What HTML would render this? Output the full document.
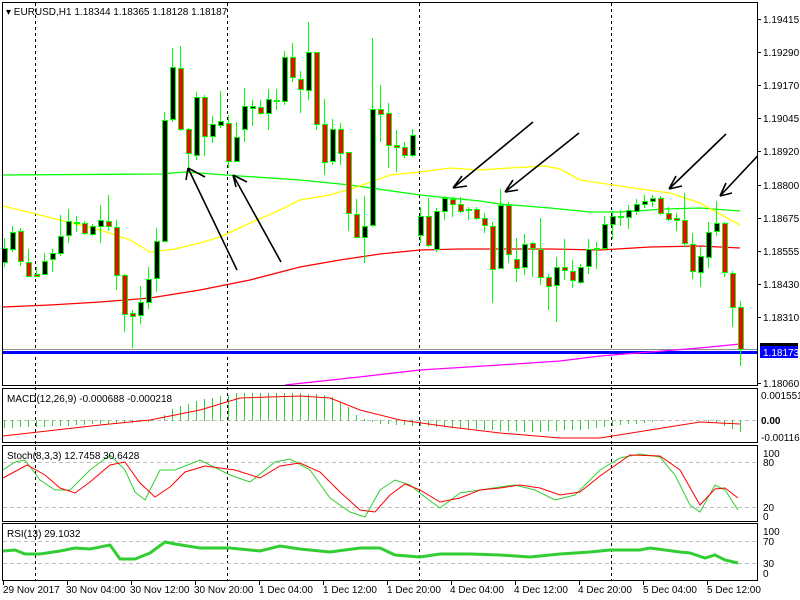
<!DOCTYPE html>
<html><head><meta charset="utf-8"><style>
html,body{margin:0;padding:0;background:#fff;width:800px;height:600px;overflow:hidden}
svg{display:block;font-family:"Liberation Sans",sans-serif;font-size:10px}
.b{fill:#000;stroke:#00ff00}.r{fill:#ff0000;stroke:#00ff00}
</style></head><body>
<svg width="800" height="600" xmlns="http://www.w3.org/2000/svg" shape-rendering="crispEdges">
<rect width="800" height="600" fill="#fff"/>
<g stroke="#000" stroke-dasharray="3,3">
<line x1="35.5" y1="3" x2="35.5" y2="580"/><line x1="227.5" y1="3" x2="227.5" y2="580"/>
<line x1="419.5" y1="3" x2="419.5" y2="580"/><line x1="611.5" y1="3" x2="611.5" y2="580"/>
</g>
<g stroke="#c0c0c0" stroke-dasharray="4,3">
<line x1="3" y1="420.5" x2="757" y2="420.5"/>
<line x1="3" y1="462.5" x2="757" y2="462.5"/><line x1="3" y1="507.5" x2="757" y2="507.5"/>
<line x1="3" y1="541.5" x2="757" y2="541.5"/><line x1="3" y1="563.5" x2="757" y2="563.5"/>
</g>
<line x1="3" y1="349.5" x2="757" y2="349.5" stroke="#909090"/>
<rect x="3" y="351" width="754" height="3" fill="#0000ff"/>
<g fill="none" shape-rendering="auto" stroke-width="1.3">
<polyline stroke="#00ff00" points="3,175 160,174 185,172 240,176 300,180 350,185 420,195 480,201 500,204 550,208 590,212 620,212 665,209 700,208 740,211"/>
<polyline stroke="#ffff00" points="3,206 40,215 100,230 130,240 150,252 175,249 200,243 220,237 250,223 280,210 300,200 330,195 360,186 390,175 420,172 450,168 480,170 510,168 545,166 560,169 580,180 600,183 640,189 670,193 700,203 740,225"/>
<polyline stroke="#ff0000" points="3,307 50,305 100,302 150,298 200,290 250,280 300,267 340,260 380,254 420,250 460,249 500,249 550,249 600,250 650,247 700,246 740,248"/>
<polyline stroke="#ff00ff" points="285,385 350,378 420,370 500,365 560,361 600,356 650,352 700,348 740,344"/>
</g>
<path stroke="#00ff00" fill="none" d="M4.5,238V267M12.5,226V252M20.5,228V266M28.5,249V277M36.5,267V277M44.5,253V275M52.5,249V272M60.5,215V256M68.5,209V243M76.5,216V232M84.5,221V235M92.5,224V236M100.5,205V243M108.5,195V231M116.5,220V290M124.5,274V332M132.5,310V348M140.5,286V324M148.5,267V309M156.5,228V292M164.5,112V241M172.5,48V122M180.5,46V131M188.5,128V172M196.5,92V160M204.5,95V156M212.5,116V143M220.5,91V128M228.5,115V168M236.5,122V161M244.5,88V142M252.5,100V126M260.5,100V115M268.5,89V130M276.5,89V110M284.5,51V105M292.5,43V82M300.5,71V113M308.5,22V100M316.5,52V130M324.5,99V175M332.5,119V165M340.5,123V165M348.5,152V231M356.5,199V238M364.5,196V263M372.5,38V227M380.5,85V142M388.5,103V168M396.5,130V172M404.5,142V158M412.5,129V157M420.5,207V243M428.5,198V247M436.5,208V252M444.5,196V220M452.5,197V217M460.5,197V213M468.5,207V220M476.5,207V220M484.5,213V233M492.5,222V303M500.5,189V269M508.5,202V263M516.5,238V282M524.5,234V275M532.5,242V277M540.5,218V285M548.5,274V310M556.5,257V322M564.5,239V280M572.5,260V288M580.5,264V284M588.5,239V274M596.5,242V269M604.5,216V250M612.5,211V239M620.5,210V226M628.5,205V229M636.5,199V215M644.5,195V208M652.5,195V207M660.5,196V215M668.5,207V221M676.5,213V231M684.5,193V247M692.5,233V279M700.5,247V287M708.5,222V268M716.5,201V236M724.5,222V277M732.5,271V327M740.5,301V366"/>
<g>
<rect class="b" x="2.5" y="248.5" width="5" height="14"/>
<rect class="b" x="10.5" y="232.5" width="5" height="17"/>
<rect class="r" x="18.5" y="231.5" width="5" height="30"/>
<rect class="r" x="26.5" y="262.5" width="5" height="14"/>
<rect class="r" x="34.5" y="274.5" width="5" height="2"/>
<rect class="b" x="42.5" y="261.5" width="5" height="13"/>
<rect class="b" x="50.5" y="253.5" width="5" height="6"/>
<rect class="b" x="58.5" y="236.5" width="5" height="17"/>
<rect class="b" x="66.5" y="221.5" width="5" height="14"/>
<rect class="b" x="74.5" y="222.5" width="5" height="1"/>
<rect class="r" x="82.5" y="223.5" width="5" height="10"/>
<rect class="b" x="90.5" y="226.5" width="5" height="8"/>
<rect class="b" x="98.5" y="220.5" width="5" height="6"/>
<rect class="r" x="106.5" y="221.5" width="5" height="5"/>
<rect class="r" x="114.5" y="227.5" width="5" height="48"/>
<rect class="r" x="122.5" y="275.5" width="5" height="39"/>
<rect class="r" x="130.5" y="313.5" width="5" height="3"/>
<rect class="b" x="138.5" y="302.5" width="5" height="13"/>
<rect class="b" x="146.5" y="279.5" width="5" height="23"/>
<rect class="b" x="154.5" y="241.5" width="5" height="37"/>
<rect class="b" x="162.5" y="120.5" width="5" height="121"/>
<rect class="b" x="170.5" y="67.5" width="5" height="52"/>
<rect class="r" x="178.5" y="68.5" width="5" height="61"/>
<rect class="r" x="186.5" y="129.5" width="5" height="24"/>
<rect class="b" x="194.5" y="97.5" width="5" height="58"/>
<rect class="r" x="202.5" y="97.5" width="5" height="39"/>
<rect class="b" x="210.5" y="124.5" width="5" height="12"/>
<rect class="b" x="218.5" y="121.5" width="5" height="4"/>
<rect class="r" x="226.5" y="123.5" width="5" height="38"/>
<rect class="b" x="234.5" y="137.5" width="5" height="24"/>
<rect class="b" x="242.5" y="106.5" width="5" height="23"/>
<rect class="b" x="250.5" y="106.5" width="5" height="2"/>
<rect class="r" x="258.5" y="107.5" width="5" height="6"/>
<rect class="b" x="266.5" y="99.5" width="5" height="14"/>
<rect class="b" x="274.5" y="100.5" width="5" height="1"/>
<rect class="b" x="282.5" y="57.5" width="5" height="44"/>
<rect class="r" x="290.5" y="57.5" width="5" height="20"/>
<rect class="r" x="298.5" y="79.5" width="5" height="10"/>
<rect class="b" x="306.5" y="52.5" width="5" height="38"/>
<rect class="r" x="314.5" y="52.5" width="5" height="72"/>
<rect class="r" x="322.5" y="124.5" width="5" height="38"/>
<rect class="b" x="330.5" y="129.5" width="5" height="32"/>
<rect class="r" x="338.5" y="129.5" width="5" height="24"/>
<rect class="r" x="346.5" y="152.5" width="5" height="61"/>
<rect class="r" x="354.5" y="214.5" width="5" height="23"/>
<rect class="b" x="362.5" y="226.5" width="5" height="11"/>
<rect class="b" x="370.5" y="109.5" width="5" height="116"/>
<rect class="r" x="378.5" y="109.5" width="5" height="5"/>
<rect class="r" x="386.5" y="113.5" width="5" height="32"/>
<rect class="r" x="394.5" y="145.5" width="5" height="2"/>
<rect class="r" x="402.5" y="147.5" width="5" height="8"/>
<rect class="b" x="410.5" y="135.5" width="5" height="20"/>
<rect class="b" x="418.5" y="216.5" width="5" height="19"/>
<rect class="r" x="426.5" y="216.5" width="5" height="29"/>
<rect class="b" x="434.5" y="211.5" width="5" height="38"/>
<rect class="b" x="442.5" y="198.5" width="5" height="13"/>
<rect class="r" x="450.5" y="199.5" width="5" height="5"/>
<rect class="r" x="458.5" y="204.5" width="5" height="7"/>
<rect class="b" x="466.5" y="209.5" width="5" height="1"/>
<rect class="r" x="474.5" y="209.5" width="5" height="9"/>
<rect class="r" x="482.5" y="218.5" width="5" height="7"/>
<rect class="r" x="490.5" y="226.5" width="5" height="43"/>
<rect class="b" x="498.5" y="205.5" width="5" height="63"/>
<rect class="r" x="506.5" y="205.5" width="5" height="49"/>
<rect class="r" x="514.5" y="259.5" width="5" height="9"/>
<rect class="b" x="522.5" y="244.5" width="5" height="23"/>
<rect class="r" x="530.5" y="243.5" width="5" height="5"/>
<rect class="r" x="538.5" y="249.5" width="5" height="28"/>
<rect class="r" x="546.5" y="277.5" width="5" height="9"/>
<rect class="b" x="554.5" y="267.5" width="5" height="18"/>
<rect class="r" x="562.5" y="267.5" width="5" height="3"/>
<rect class="r" x="570.5" y="271.5" width="5" height="9"/>
<rect class="b" x="578.5" y="267.5" width="5" height="15"/>
<rect class="b" x="586.5" y="249.5" width="5" height="17"/>
<rect class="b" x="594.5" y="248.5" width="5" height="1"/>
<rect class="b" x="602.5" y="224.5" width="5" height="24"/>
<rect class="b" x="610.5" y="216.5" width="5" height="8"/>
<rect class="b" x="618.5" y="216.5" width="5" height="1"/>
<rect class="b" x="626.5" y="210.5" width="5" height="7"/>
<rect class="b" x="634.5" y="204.5" width="5" height="7"/>
<rect class="b" x="642.5" y="201.5" width="5" height="3"/>
<rect class="b" x="650.5" y="198.5" width="5" height="3"/>
<rect class="r" x="658.5" y="198.5" width="5" height="15"/>
<rect class="r" x="666.5" y="213.5" width="5" height="6"/>
<rect class="r" x="674.5" y="218.5" width="5" height="2"/>
<rect class="r" x="682.5" y="220.5" width="5" height="23"/>
<rect class="r" x="690.5" y="244.5" width="5" height="27"/>
<rect class="b" x="698.5" y="256.5" width="5" height="16"/>
<rect class="b" x="706.5" y="232.5" width="5" height="25"/>
<rect class="b" x="714.5" y="223.5" width="5" height="8"/>
<rect class="r" x="722.5" y="223.5" width="5" height="49"/>
<rect class="r" x="730.5" y="273.5" width="5" height="34"/>
<rect class="r" x="738.5" y="307.5" width="5" height="42"/>
</g>
<path stroke="#32cd32" fill="none" d="M4.5,420V428M12.5,420V428M20.5,420V427M28.5,420V427M36.5,420V427M44.5,420V427M52.5,420V426M60.5,420V426M68.5,420V426M76.5,420V425M84.5,420V425M92.5,420V424M100.5,420V424M108.5,420V424M116.5,420V423M124.5,420V423M132.5,420V423M140.5,420V422M148.5,420V422M164.5,421V415M172.5,421V409M180.5,421V406M188.5,421V404M196.5,421V401M204.5,421V399M212.5,421V398M220.5,421V396M228.5,421V395M236.5,421V393M244.5,421V393M252.5,421V393M260.5,421V393M268.5,421V393M276.5,421V393M284.5,421V393M292.5,421V393M300.5,421V393M308.5,421V394M316.5,421V394M324.5,421V395M332.5,421V397M340.5,421V402M348.5,421V407M356.5,421V415M364.5,421V419M372.5,420V422M380.5,420V424M388.5,420V424M396.5,420V425M404.5,420V425M412.5,420V426M420.5,420V426M428.5,420V426M436.5,420V427M444.5,420V427M452.5,420V428M460.5,420V428M468.5,420V429M476.5,420V429M484.5,420V430M492.5,420V430M500.5,420V431M508.5,420V431M516.5,420V431M524.5,420V432M532.5,420V432M540.5,420V432M548.5,420V431M556.5,420V431M564.5,420V430M572.5,420V430M580.5,420V430M588.5,420V429M596.5,420V428M604.5,420V427M612.5,420V426M620.5,420V425M628.5,420V424M636.5,420V424M644.5,420V423M652.5,420V422M660.5,420V421M708.5,420V422M716.5,420V423M724.5,420V426M732.5,420V429M740.5,420V432"/>
<polyline fill="none" stroke="#ff0000" shape-rendering="auto" points="3,436 100,425 150,420 200,410 240,398 300,396 330,398 360,410 400,420 450,427 500,433 560,438 600,438 650,430 700,422 740,424"/>
<g fill="none" shape-rendering="auto">
<polyline stroke="#32cd32" points="3,470 15,462 25,460 40,480 55,490 70,490 90,470 110,455 125,470 135,492 145,500 160,470 175,470 200,460 230,475 250,482 275,462 290,459 310,470 330,498 350,512 365,517 380,490 395,480 410,485 425,497 440,508 460,493 480,490 500,487 515,485 535,490 555,500 575,495 600,470 620,458 640,454 660,457 675,475 690,505 700,512 715,485 725,490 738,510"/>
<polyline stroke="#ff0000" points="3,478 27,465 45,475 60,488 75,493 90,482 110,465 125,462 140,483 155,497 170,487 185,472 205,466 235,470 260,478 280,466 300,463 320,472 340,492 360,510 375,512 390,495 405,484 420,490 440,502 460,498 480,490 500,488 520,485 540,488 560,495 580,492 600,476 630,455 660,456 680,470 700,505 715,489 725,488 738,498"/>
<polyline stroke="#32cd32" stroke-width="3" points="3,551 15,550 25,554 40,554 60,551 75,548 90,549 110,545 120,559 135,559 150,553 165,542 175,544 200,548 230,548 260,551 280,546 300,549 330,552 360,548 380,548 395,555 420,557 440,554 470,554 500,555 530,557 560,554 590,552 610,550 640,550 650,548 680,552 690,553 705,558 715,555 725,560 738,563"/>
</g>
<g stroke="#000" stroke-width="1.6" fill="none" shape-rendering="auto">
<path d="M237,270 L188,168 M188,168 L186,180 M188,168 L205,177"/>
<path d="M281,262 L233,175 M233,175 L236,187 M233,175 L247,182"/>
<path d="M533,122 L453,188 M453,188 L462,176 M453,188 L467,186"/>
<path d="M579,133 L505,192 M505,192 L513,180 M505,192 L518,190"/>
<path d="M726,134 L669,189 M669,189 L676,176 M669,189 L682,186"/>
<path d="M766,147 L720,196 M720,196 L726,183 M720,196 L732,193"/>
</g>
<g fill="none" stroke="#000">
<rect x="2.5" y="2.5" width="755" height="383"/>
<rect x="2.5" y="388.5" width="755" height="54"/>
<rect x="2.5" y="445.5" width="755" height="76"/>
<rect x="2.5" y="523.5" width="755" height="57"/>
</g>
<rect x="758" y="0" width="42" height="600" fill="#fff"/>
<rect x="0" y="0" width="2" height="600" fill="#fff"/>
<rect x="760" y="343" width="38" height="5" fill="#000"/>
<rect x="760" y="346" width="38" height="12" fill="#0000ff"/>
<path stroke="#000" d="M757,19.5h4M757,52.5h4M757,85.5h4M757,118.5h4M757,151.5h4M757,185.5h4M757,218.5h4M757,251.5h4M757,284.5h4M757,317.5h4M757,383.5h4M3.5,581v4M67.5,581v4M131.5,581v4M195.5,581v4M259.5,581v4M323.5,581v4M387.5,581v4M451.5,581v4M515.5,581v4M579.5,581v4M643.5,581v4M707.5,581v4"/>
<g fill="#000">
<text x="6" y="15">▾ EURUSD,H1  1.18344 1.18365 1.18128 1.18187</text>
<text x="7" y="402">MACD(12,26,9) -0.000688 -0.000218</text>
<text x="7" y="459">Stoch(8,3,3) 12.7458 30.6428</text>
<text x="7" y="537">RSI(13) 29.1032</text>
<text x="763" y="23">1.19415</text><text x="763" y="56">1.19290</text><text x="763" y="89">1.19170</text>
<text x="763" y="122">1.19045</text><text x="763" y="155">1.18920</text><text x="763" y="189">1.18800</text>
<text x="763" y="222">1.18675</text><text x="763" y="255">1.18555</text><text x="763" y="288">1.18430</text>
<text x="763" y="321">1.18310</text><text x="763" y="387">1.18060</text>
<text x="763" y="356" fill="#fff">1.18173</text>
<text x="761" y="399">0.001551</text><text x="761" y="424" font-weight="bold">0.00</text><text x="761" y="441">-0.001163</text>
<text x="763" y="457">100</text><text x="763" y="466">80</text><text x="763" y="511">20</text><text x="763" y="520">0</text>
<text x="763" y="535">100</text><text x="763" y="545">70</text><text x="763" y="567">30</text><text x="763" y="577">0</text>
<text x="3" y="593">29 Nov 2017</text><text x="66" y="593">30 Nov 04:00</text><text x="130" y="593">30 Nov 12:00</text>
<text x="194" y="593">30 Nov 20:00</text><text x="259" y="593">1 Dec 04:00</text><text x="323" y="593">1 Dec 12:00</text>
<text x="387" y="593">1 Dec 20:00</text><text x="450" y="593">4 Dec 04:00</text><text x="514" y="593">4 Dec 12:00</text>
<text x="578" y="593">4 Dec 20:00</text><text x="643" y="593">5 Dec 04:00</text><text x="707" y="593">5 Dec 12:00</text>
</g>
</svg>
</body></html>
